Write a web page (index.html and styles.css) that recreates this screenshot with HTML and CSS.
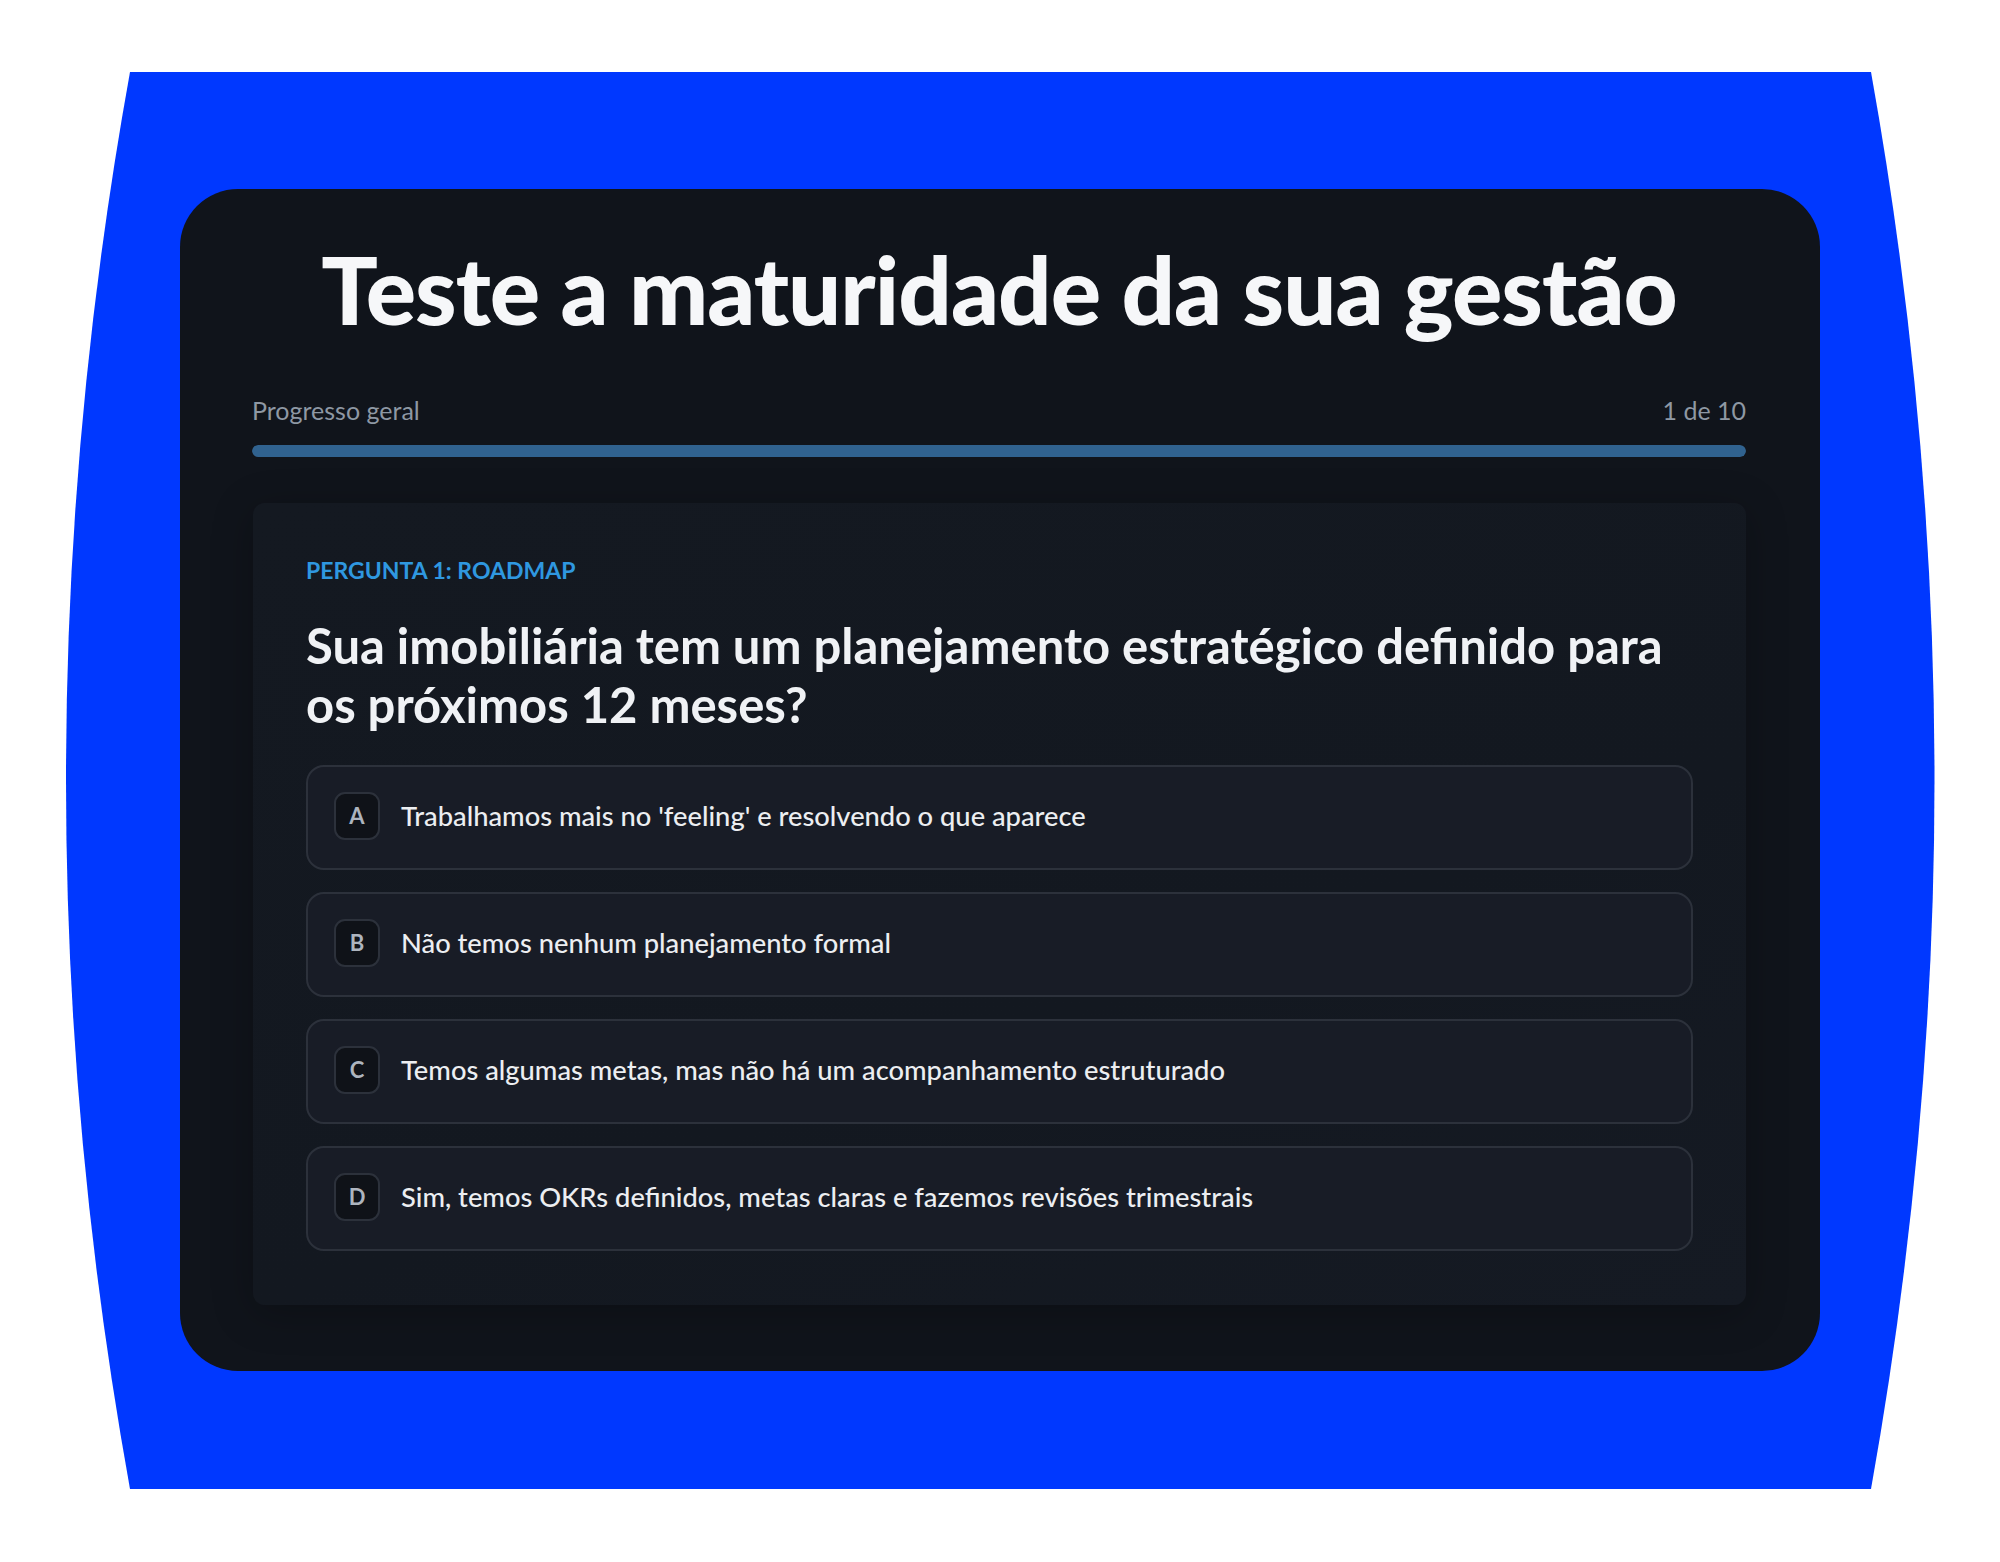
FILE: index.html
```html
<!DOCTYPE html>
<html lang="pt-BR">
<head>
<meta charset="utf-8">
<title>Teste a maturidade da sua gestão</title>
<link rel="stylesheet" href="styles.css">
</head>
<body>
<div class="stage">
  <svg class="backdrop" width="2000" height="1562" viewBox="0 0 2000 1562" aria-hidden="true">
    <path d="M130 72 L1871 72 Q1998 780 1871 1489 L130 1489 Q2 780 130 72 Z" fill="#0038ff"/>
  </svg>
  <main class="card">
    <h1 class="title">Teste a maturidade da sua gestão</h1>
    <div class="progress-head">
      <span>Progresso geral</span>
      <span>1 de 10</span>
    </div>
    <div class="progress-bar"><div class="progress-fill"></div></div>
    <section class="panel">
      <div class="kicker">PERGUNTA 1: ROADMAP</div>
      <h2 class="question">Sua imobiliária tem um planejamento estratégico definido para os próximos 12 meses?</h2>
      <ul class="options">
        <li class="option"><span class="badge">A</span><span class="opt-text">Trabalhamos mais no 'feeling' e resolvendo o que aparece</span></li>
        <li class="option"><span class="badge">B</span><span class="opt-text">Não temos nenhum planejamento formal</span></li>
        <li class="option"><span class="badge">C</span><span class="opt-text">Temos algumas metas, mas não há um acompanhamento estruturado</span></li>
        <li class="option"><span class="badge">D</span><span class="opt-text">Sim, temos OKRs definidos, metas claras e fazemos revisões trimestrais</span></li>
      </ul>
    </section>
  </main>
</div>
</body>
</html>
```
FILE: styles.css
```css
html, body {
  margin: 0;
  padding: 0;
  background: #ffffff;
}
body {
  font-family: Lato, "Open Sans", "Liberation Sans", sans-serif;
}
.stage {
  position: relative;
  width: 2000px;
  height: 1562px;
  padding: 189px 0 0 180px;
  box-sizing: border-box;
  overflow: hidden;
}
.backdrop {
  position: absolute;
  left: 0;
  top: 0;
}
.card {
  position: relative;
  width: 1640px;
  height: 1182px;
  box-sizing: border-box;
  padding: 44px 74px 0 72px;
  background: #10141b;
  border-radius: 58px;
}
.title {
  margin: 0;
  text-align: center;
  color: #f6f7f9;
  font-size: 94px;
  font-weight: 900;
  line-height: 1.2;
  letter-spacing: -1px;
}
.progress-head {
  display: flex;
  justify-content: space-between;
  margin-top: 49px;
  color: #8e98a4;
  font-size: 25px;
  line-height: 30px;
}
.progress-bar {
  margin-top: 20px;
  height: 12px;
  border-radius: 6px;
  background: #1f2a36;
  overflow: hidden;
}
.progress-fill {
  height: 100%;
  width: 100%;
  background: #30628f;
  border-radius: 6px;
}
.panel {
  margin: 46px 0 0 1px;
  padding: 53px 53px 54px 53px;
  background: linear-gradient(160deg, #141921 0%, #131820 60%, #151a23 100%);
  border-radius: 12px;
  box-shadow: 0 8px 40px rgba(0, 0, 0, 0.25);
}
.kicker {
  color: #2f98e0;
  font-size: 23px;
  font-weight: 700;
  line-height: 28px;
}
.question {
  margin: 32px 0 0 0;
  color: #f0f2f5;
  font-size: 49px;
  font-weight: 700;
  line-height: 59px;
}
.options {
  list-style: none;
  margin: 31px 0 0 0;
  padding: 0;
  display: flex;
  flex-direction: column;
  gap: 22px;
}
.option {
  display: flex;
  align-items: center;
  gap: 21px;
  height: 105px;
  box-sizing: border-box;
  padding: 0 26px 3px 26px;
  background: #181c26;
  border: 2px solid #2c313b;
  border-radius: 18px;
}
.badge {
  display: flex;
  align-items: center;
  justify-content: center;
  width: 46px;
  height: 48px;
  box-sizing: border-box;
  border: 2px solid #2c313b;
  border-radius: 11px;
  background: #0f1218;
  color: #adb4be;
  font-size: 22px;
  font-weight: 700;
}
.opt-text {
  color: #eceef1;
  font-size: 27.3px;
  font-weight: 500;
  line-height: 32px;
}
```
